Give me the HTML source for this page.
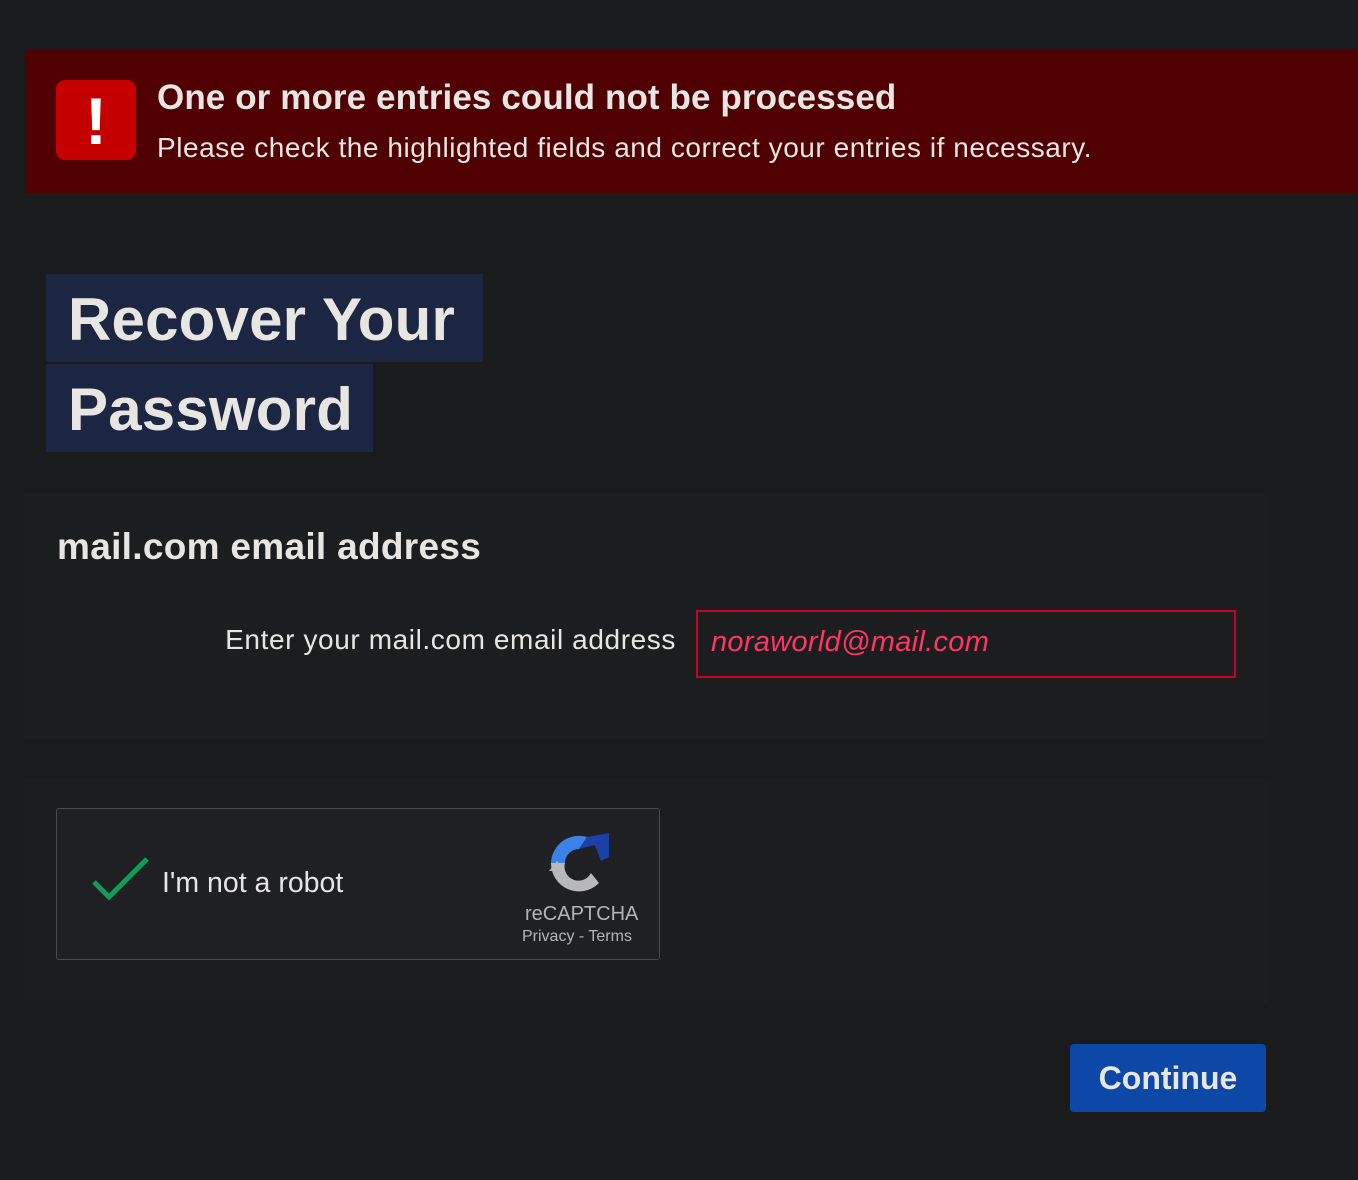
<!DOCTYPE html>
<html><head><meta charset="utf-8"><style>
*{margin:0;padding:0;box-sizing:border-box}
body{width:1358px;height:1180px;background:#1a1b1d;font-family:"Liberation Sans",sans-serif;color:#e8e6e3;position:relative;overflow:hidden}
.err{position:absolute;left:25px;top:50px;width:1333px;height:143px;background:#500002}
.ico{position:absolute;left:56px;top:80px;width:80px;height:80px;background:#c50000;border-radius:9px;color:#fff;font-weight:bold;font-size:66px;text-align:center;line-height:82px}
.t1{position:absolute;left:157px;top:78px;font-size:35px;letter-spacing:0.1px;font-weight:bold;white-space:nowrap}
.t2{position:absolute;left:157px;top:132px;font-size:28px;letter-spacing:0.55px;white-space:nowrap}
.h{position:absolute;left:46px;background:#1c2541;font-size:60px;font-weight:bold;padding-left:22px;height:88px;line-height:92px;white-space:nowrap;letter-spacing:0.2px}
.p{position:absolute;left:24px;width:1244px;background:#1c1d1f}
.lab{position:absolute;left:57px;top:526px;font-size:37px;letter-spacing:0.3px;font-weight:bold}
.el{position:absolute;right:682px;top:624px;font-size:28px;letter-spacing:0.6px;white-space:nowrap}
.inp{position:absolute;left:696px;top:610px;width:540px;height:68px;border:2px solid #c8002e;color:#ff3566;font-style:italic;font-size:29px;letter-spacing:0.3px;padding:14px 13px}
.cap{position:absolute;left:56px;top:808px;width:604px;height:152px;border:1.5px solid #474a4e;border-radius:3px;background:#1e2023}
.btn{position:absolute;left:1070px;top:1044px;width:196px;height:68px;background:#0d47a8;border-radius:4px;font-size:32px;font-weight:bold;text-align:center;line-height:68px}
</style></head><body>
<div class="err"></div>
<div class="ico">!</div>
<div class="t1">One or more entries could not be processed</div>
<div class="t2">Please check the highlighted fields and correct your entries if necessary.</div>
<div class="h" style="top:274px;width:437px">Recover Your</div>
<div class="h" style="top:364px;width:327px">Password</div>
<div class="p" style="top:494px;height:244px"></div>
<div class="p" style="top:778px;height:225px"></div>
<div class="lab">mail.com email address</div>
<div class="el">Enter your mail.com email address</div>
<div class="inp">noraworld@mail.com</div>
<div class="cap">
<svg style="position:absolute;left:34px;top:46px" width="60" height="46" viewBox="0 0 60 46"><path d="M3 27 L18 42 L56 4" fill="none" stroke="#0f9d58" stroke-width="5"/></svg>
<div style="position:absolute;left:105px;top:58px;font-size:28.5px;color:#e8e6e3">I'm not a robot</div>
<svg style="position:absolute;left:490px;top:22px" width="64" height="62" viewBox="0 0 64 62">
<path d="M4 32 A28 28 0 0 1 40 6 L32 18 A14 14 0 0 0 18 32 Z" fill="#3b82e8"/>
<path d="M40 6 L62 2 V26 L54 30 L48 14 L32 18 Z" fill="#1c3fa8"/>
<path d="M4 32 H18 A14 14 0 0 0 44 42 L52 52 A28 28 0 0 1 4 32 Z" fill="#b8b8b8"/>
<path d="M2 40 L10 30 L18 40 Z" fill="#b8b8b8"/>
</svg>
<div style="position:absolute;left:468px;top:94px;font-size:20px;color:#b5b5b5">reCAPTCHA</div>
<div style="position:absolute;left:465px;top:119px;font-size:16px;color:#b5b5b5">Privacy - Terms</div>
</div>
<div class="btn">Continue</div>
</body></html>
